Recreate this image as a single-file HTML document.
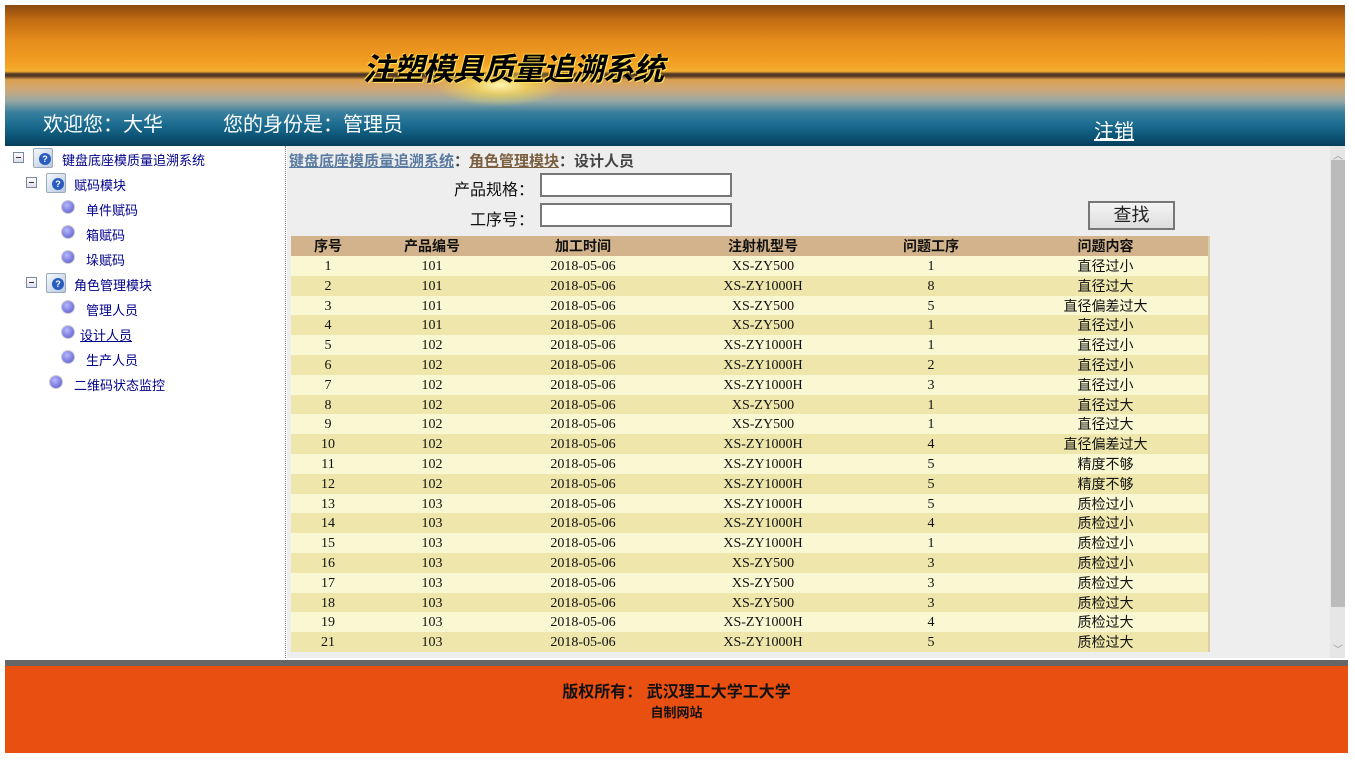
<!DOCTYPE html>
<html><head><meta charset="utf-8"><style>
*{margin:0;padding:0;box-sizing:border-box}
body{width:1355px;height:760px;background:#fff;position:relative;overflow:hidden;font-family:"Liberation Sans","Noto Sans CJK SC",sans-serif}
.hdr{position:absolute;left:5px;top:5px;width:1340px;height:141px;overflow:hidden;
background:linear-gradient(180deg,#8a4a10 0%,#c06a12 10%,#e58c1c 25%,#f29e22 40%,#f5ae30 47%,#4a3424 49%,#5a3c24 50.5%,#dca050 53%,#cfa878 60%,#98a8a4 68%,#3a809e 76%,#1b6c90 85%,#0d5476 93%,#073e5c 100%)}
.hdr .sun{position:absolute;left:430px;top:58px;width:130px;height:44px;background:radial-gradient(ellipse at center,rgba(255,250,180,.95) 0%,rgba(255,230,80,.55) 30%,rgba(255,200,40,0) 70%)}
.title{position:absolute;left:363px;top:44px;font-size:31px;font-weight:bold;font-style:italic;color:#000;text-shadow:1px 1px 0 #ffe060,-1px -1px 0 #ffd040;letter-spacing:-1px}
.wl{position:absolute;top:108px;color:#fff;font-size:20px}
.side{position:absolute;left:5px;top:146px;width:281px;height:512px;border-right:1px dotted #888;font-size:13px;color:#00008b}
.it{position:absolute;white-space:nowrap}
.pm{position:absolute;width:11px;height:11px;border:1px solid #7a8a9a;background:linear-gradient(#fff,#dde);}
.pm:after{content:"";position:absolute;left:2px;top:4px;width:5px;height:1px;background:#333}
.bk{position:absolute;width:20px;height:20px;background:linear-gradient(135deg,#f4f8fc,#b8c8e0);border:1px solid #9ab;border-radius:2px}
.bk:after{content:"?";position:absolute;left:5px;top:4px;width:12px;height:12px;border-radius:50%;background:#2a5cc0;color:#fff;font-size:9px;text-align:center;line-height:12px;font-weight:bold}
.q{position:absolute;width:12px;height:12px;border-radius:50%;background:radial-gradient(circle at 40% 35%,#b8b8ff,#5050c8);box-shadow:0 0 0 1px #ccc}
.main{position:absolute;left:287px;top:146px;width:1043px;height:512px;background:#eee;overflow:hidden}
.sb{position:absolute;left:1330px;top:146px;width:15px;height:512px;background:#e6e6e6}
.th{position:absolute;left:1331px;top:160px;width:14px;height:447px;background:#bbb}
.bc{position:absolute;left:2px;top:4px;font-size:15px;font-weight:bold;color:#444;white-space:nowrap}
.lbl{position:absolute;font-size:16px;color:#111}
.inp{position:absolute;left:253px;width:192px;height:24px;background:#fff;border:2px solid #777}
.btn{position:absolute;left:801px;top:55px;width:87px;height:29px;border:2px solid #777;background:linear-gradient(#f4f4f4,#ddd);font-size:18px;text-align:center;line-height:25px;color:#222}
table{position:absolute;left:4px;top:90px;width:919px;border-collapse:collapse;font-family:"Liberation Serif","Noto Serif CJK SC",serif;font-size:14px;color:#111;border-right:2px solid #dca}
td,th{height:19.8px;text-align:center;padding:0;overflow:hidden}
td{padding-top:3px;line-height:16.8px}
td:last-child{padding-top:1px;line-height:18.8px;font-family:"Liberation Sans","Noto Sans CJK SC",sans-serif}
th{background:#d2b38b;font-family:"Liberation Sans","Noto Sans CJK SC",sans-serif;font-size:14px;height:20px;line-height:20px}
tr:nth-child(even) td{background:#faf8d2}
tr:nth-child(odd) td{background:#eee6aa}
.fg{position:absolute;left:5px;top:660px;width:1343px;height:6px;background:#666}
.ft{position:absolute;left:5px;top:666px;width:1343px;height:87px;background:#e84f10;text-align:center;color:#111;font-weight:bold}
</style></head><body>
<div class="hdr"><div class="sun"></div></div>
<div class="title">注塑模具质量追溯系统</div>
<div class="wl" style="left:43px">欢迎您：大华</div>
<div class="wl" style="left:223px">您的身份是：管理员</div>
<div class="wl" style="left:1094px;top:115px;text-decoration:underline">注销</div>

<div class="side">
<div class="pm" style="left:8px;top:6px"></div><div class="bk" style="left:28px;top:2px"></div><div class="it" style="left:57px;top:4px">键盘底座模质量追溯系统</div>
<div class="pm" style="left:21px;top:31px"></div><div class="bk" style="left:41px;top:27px"></div><div class="it" style="left:69px;top:29px">赋码模块</div>
<div class="q" style="left:57px;top:55px"></div><div class="it" style="left:81px;top:54px">单件赋码</div>
<div class="q" style="left:57px;top:80px"></div><div class="it" style="left:81px;top:79px">箱赋码</div>
<div class="q" style="left:57px;top:105px"></div><div class="it" style="left:81px;top:104px">垛赋码</div>
<div class="pm" style="left:21px;top:131px"></div><div class="bk" style="left:41px;top:127px"></div><div class="it" style="left:69px;top:129px">角色管理模块</div>
<div class="q" style="left:57px;top:155px"></div><div class="it" style="left:81px;top:154px">管理人员</div>
<div class="q" style="left:57px;top:180px"></div><div class="it" style="left:75px;top:179px;text-decoration:underline">设计人员</div>
<div class="q" style="left:57px;top:205px"></div><div class="it" style="left:81px;top:204px">生产人员</div>
<div class="q" style="left:45px;top:230px"></div><div class="it" style="left:69px;top:229px">二维码状态监控</div>
</div>

<div class="main">
<div class="bc"><span style="color:#5a7aa0;text-decoration:underline">键盘底座模质量追溯系统</span>：<span style="color:#7a6040;text-decoration:underline">角色管理模块</span>：设计人员</div>
<div class="lbl" style="left:167px;top:30px">产品规格：</div><div class="inp" style="top:27px"></div>
<div class="lbl" style="left:183px;top:60px">工序号：</div><div class="inp" style="top:57px"></div>
<div class="btn">查找</div>
<table>
<tr><th style="width:74px">序号</th><th style="width:134px">产品编号</th><th style="width:168px">加工时间</th><th style="width:192px">注射机型号</th><th style="width:144px">问题工序</th><th>问题内容</th></tr>
<tr><td>1</td><td>101</td><td>2018-05-06</td><td>XS-ZY500</td><td>1</td><td>直径过小</td></tr>
<tr><td>2</td><td>101</td><td>2018-05-06</td><td>XS-ZY1000H</td><td>8</td><td>直径过大</td></tr>
<tr><td>3</td><td>101</td><td>2018-05-06</td><td>XS-ZY500</td><td>5</td><td>直径偏差过大</td></tr>
<tr><td>4</td><td>101</td><td>2018-05-06</td><td>XS-ZY500</td><td>1</td><td>直径过小</td></tr>
<tr><td>5</td><td>102</td><td>2018-05-06</td><td>XS-ZY1000H</td><td>1</td><td>直径过小</td></tr>
<tr><td>6</td><td>102</td><td>2018-05-06</td><td>XS-ZY1000H</td><td>2</td><td>直径过小</td></tr>
<tr><td>7</td><td>102</td><td>2018-05-06</td><td>XS-ZY1000H</td><td>3</td><td>直径过小</td></tr>
<tr><td>8</td><td>102</td><td>2018-05-06</td><td>XS-ZY500</td><td>1</td><td>直径过大</td></tr>
<tr><td>9</td><td>102</td><td>2018-05-06</td><td>XS-ZY500</td><td>1</td><td>直径过大</td></tr>
<tr><td>10</td><td>102</td><td>2018-05-06</td><td>XS-ZY1000H</td><td>4</td><td>直径偏差过大</td></tr>
<tr><td>11</td><td>102</td><td>2018-05-06</td><td>XS-ZY1000H</td><td>5</td><td>精度不够</td></tr>
<tr><td>12</td><td>102</td><td>2018-05-06</td><td>XS-ZY1000H</td><td>5</td><td>精度不够</td></tr>
<tr><td>13</td><td>103</td><td>2018-05-06</td><td>XS-ZY1000H</td><td>5</td><td>质检过小</td></tr>
<tr><td>14</td><td>103</td><td>2018-05-06</td><td>XS-ZY1000H</td><td>4</td><td>质检过小</td></tr>
<tr><td>15</td><td>103</td><td>2018-05-06</td><td>XS-ZY1000H</td><td>1</td><td>质检过小</td></tr>
<tr><td>16</td><td>103</td><td>2018-05-06</td><td>XS-ZY500</td><td>3</td><td>质检过小</td></tr>
<tr><td>17</td><td>103</td><td>2018-05-06</td><td>XS-ZY500</td><td>3</td><td>质检过大</td></tr>
<tr><td>18</td><td>103</td><td>2018-05-06</td><td>XS-ZY500</td><td>3</td><td>质检过大</td></tr>
<tr><td>19</td><td>103</td><td>2018-05-06</td><td>XS-ZY1000H</td><td>4</td><td>质检过大</td></tr>
<tr><td>21</td><td>103</td><td>2018-05-06</td><td>XS-ZY1000H</td><td>5</td><td>质检过大</td></tr>
</table>
</div>
<div class="sb"></div><div class="th"></div>
<div style="position:absolute;left:1333px;top:147px;font-size:10px;color:#999">︿</div>
<div style="position:absolute;left:1333px;top:641px;font-size:10px;color:#999">﹀</div>

<div class="fg"></div>
<div class="ft"><div style="font-size:16px;margin-top:12px">版权所有： 武汉理工大学工大学</div><div style="font-size:13px;margin-top:0px">自制网站</div></div>
</body></html>
